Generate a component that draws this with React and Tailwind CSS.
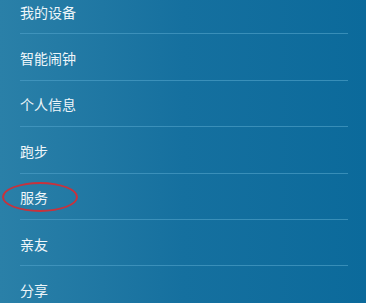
const items = ["我的设备", "智能闹钟", "个人信息", "跑步", "服务", "亲友", "分享"];

export default function App() {
  return (
    <div
      className="w-[366px] h-[303px] overflow-hidden bg-gradient-to-r from-[#2a80a8] via-[#15709f] to-[#0b6a9b]"
      style={{ fontFamily: '"Noto Sans CJK SC", "Noto Sans", sans-serif' }}
    >
      <ul className="mt-[-12px]">
        {items.map((label) => (
          <li
            key={label}
            className="relative ml-5 mr-[18px] h-[46.4px] flex items-center pt-[3px] border-b border-[#4a9cc4]/70 text-[14px] text-[#eef6fa]"
          >
            {label}
            {label === "服务" && (
              <span className="absolute left-[-18px] top-[8px] w-[76px] h-[30px] rounded-[50%] border-2 border-[#c8323c]" />
            )}
          </li>
        ))}
      </ul>
    </div>
  );
}
